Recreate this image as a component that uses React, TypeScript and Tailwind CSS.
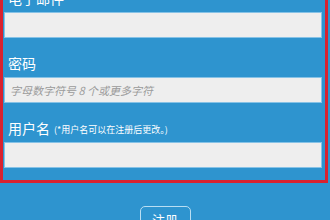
export default function App() {
  const font = { fontFamily: '"Noto Sans CJK SC", "Noto Sans", sans-serif' };

  return (
    <div
      className="w-[330px] h-[220px] overflow-hidden bg-[#2e94cf] flex flex-col"
      style={font}
    >
      {/* form box, top is scrolled off */}
      <div className="-mt-[30px] w-[328px] border-[3px] border-[#d8222f] pl-[1px] pr-[3px] pb-[12px] flex flex-col">
        <Field label="电子邮件" />
        <Field label="密码" placeholder="字母数字符号 8 个或更多字符" />
        <Field label="用户名" hint="(*用户名可以在注册后更改。)" />
      </div>

      <div className="flex justify-center pt-[23px]">
        <button className="w-[51px] h-[26px] rounded-[5px] border-[1.5px] border-[#b9def3] text-white text-[13px] leading-none flex items-center justify-center">
          注册
        </button>
      </div>

      <div className="mt-auto flex h-[1px]">
        <div className="ml-[8px] w-[105px] bg-white" />
        <div className="ml-[102px] w-[105px] bg-[#dceef9]" />
      </div>
    </div>
  );
}

function Field({ label, placeholder, hint }: { label: string; placeholder?: string; hint?: string }) {
  return (
    <div className="flex flex-col">
      <div className="h-[39px] flex items-end pb-[6px] pl-[4px] text-white">
        <span className="text-[14px] leading-[16px]">{label}</span>
        {hint && <span className="ml-[4px] text-[9px] leading-[12px]">{hint}</span>}
      </div>
      <div className="h-[26px] bg-[#eeeeee] border border-[#86c2e6] flex items-center pl-[5px]">
        {placeholder && (
          <span className="text-[11px] italic text-[#9b9b9b]">{placeholder}</span>
        )}
      </div>
    </div>
  );
}
